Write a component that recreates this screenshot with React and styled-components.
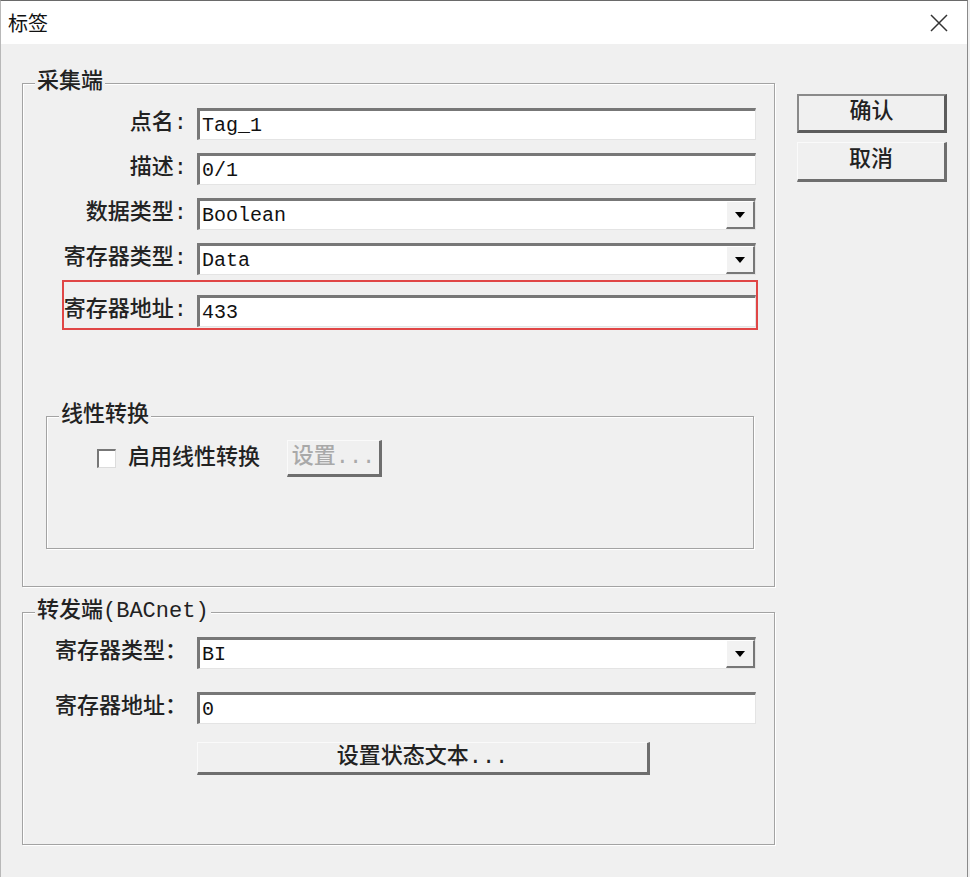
import React from "react";
import styled, { createGlobalStyle } from "styled-components";

const GlobalStyle = createGlobalStyle`
  html, body { margin: 0; padding: 0; background: #f0f0f0; }
  body { font-family: "Liberation Mono", "Noto Sans CJK SC", monospace; color: #222; }
  * { box-sizing: border-box; }
`;

const Window = styled.div`
  width: 968px;
  height: 877px;
  display: flex;
  flex-direction: column;
  border-top: 1px solid #6a6a6a;
  border-left: 1px solid #b8b8b8;
  border-right: 1px solid #8a8a8a;
  background: #f0f0f0;
`;

const TitleBar = styled.div`
  height: 43px;
  flex: none;
  background: #fff;
  display: flex;
  align-items: center;
  justify-content: space-between;
  padding: 0 19px 0 7px;
`;

const Title = styled.div`
  font-family: "Noto Sans CJK SC", sans-serif;
  font-size: 20px;
  line-height: 24px;
  color: #111;
`;

const Close = styled.svg`
  width: 18px;
  height: 18px;
`;

const Body = styled.div`
  flex: 1;
  display: flex;
  gap: 22px;
  padding: 27px 0 0 21px;
`;

const LeftCol = styled.div`
  width: 753px;
  flex: none;
  display: flex;
  flex-direction: column;
`;

const RightCol = styled.div`
  width: 150px;
  flex: none;
  display: flex;
  flex-direction: column;
  gap: 9px;
  padding-top: 23px;
`;

const Group = styled.fieldset`
  margin: ${(p) => p.$margin || "0"};
  padding: ${(p) => p.$pad || "0"};
  border: 1px solid #a3a3a3;
  box-shadow: inset 1px 1px 0 #fff, 1px 1px 0 #fff;
  min-width: 0;
`;

const Legend = styled.legend`
  margin-left: 12px;
  padding: 0 2px;
  font-size: 22px;
  line-height: 24px;
  font-weight: 500;
  color: #222;
  background: #f0f0f0;
`;

const Rows = styled.div`
  display: flex;
  flex-direction: column;
  gap: ${(p) => p.$gap}px;
`;

const Row = styled.div`
  position: relative;
  display: flex;
  align-items: center;
  gap: 10px;
  height: 32px;
  margin-top: ${(p) => p.$mt || 0}px;

  ${(p) =>
    p.$highlight &&
    `
    &::after {
      content: "";
      position: absolute;
      left: 39px;
      right: -2px;
      top: -15px;
      bottom: -3px;
      border: 2px solid #e04646;
      pointer-events: none;
    }
  `}
`;

const Label = styled.label`
  width: 164px;
  flex: none;
  text-align: right;
  font-size: 22px;
  line-height: 32px;
  font-weight: 500;
  color: #222;
  white-space: nowrap;
`;

const TextBox = styled.input`
  flex: 1;
  min-width: 0;
  height: 32px;
  margin: 0;
  background: #fff;
  border: none;
  border-top: 3px solid #777;
  border-left: 3px solid #777;
  border-right: 1px solid #e4e4e4;
  border-bottom: 1px solid #e4e4e4;
  padding: 0 0 0 2px;
  font-family: "Liberation Mono", monospace;
  font-size: 20px;
  color: #111;
  outline: none;
`;

const Combo = styled.div`
  flex: 1;
  min-width: 0;
  height: 32px;
  display: flex;
  align-items: stretch;
  background: #fff;
  border-top: 3px solid #777;
  border-left: 3px solid #777;
  border-right: 1px solid #e4e4e4;
  border-bottom: 1px solid #e4e4e4;
`;

const ComboValue = styled.div`
  flex: 1;
  display: flex;
  align-items: center;
  padding-left: 2px;
  font-family: "Liberation Mono", monospace;
  font-size: 20px;
  color: #111;
`;

const DropButton = styled.div`
  width: 29px;
  flex: none;
  display: flex;
  align-items: center;
  justify-content: center;
  background: #f2f2f2;
  border-top: 1px solid #fff;
  border-left: 1px solid #fff;
  border-right: 2px solid #777;
  border-bottom: 2px solid #777;
`;

const Arrow = styled.span`
  width: 0;
  height: 0;
  border-left: 5px solid transparent;
  border-right: 5px solid transparent;
  border-top: 6px solid #000;
`;

const CheckRow = styled.div`
  display: flex;
  align-items: center;
  height: 37px;
  padding-left: 50px;
`;

const CheckBox = styled.span`
  width: 19px;
  height: 19px;
  flex: none;
  background: #fff;
  border-top: 2px solid #777;
  border-left: 2px solid #777;
  border-right: 1px solid #dcdcdc;
  border-bottom: 1px solid #dcdcdc;
  margin-right: 12px;
`;

const CheckLabel = styled.span`
  font-size: 22px;
  line-height: 32px;
  font-weight: 500;
  color: #222;
`;

const Button = styled.button`
  width: ${(p) => p.$w}px;
  height: ${(p) => p.$h}px;
  flex: none;
  margin: 0 0 0 ${(p) => p.$ml || 0}px;
  padding: 0;
  background: #f0f0f0;
  border-top: ${(p) => (p.$default ? "2px solid #8a8a8a" : "1px solid #fafafa")};
  border-left: ${(p) => (p.$default ? "2px solid #8a8a8a" : "1px solid #fafafa")};
  border-right: 3px solid ${(p) => (p.$default ? "#5c5c5c" : "#6e6e6e")};
  border-bottom: 3px solid ${(p) => (p.$default ? "#5c5c5c" : "#6e6e6e")};
  font-family: "Liberation Mono", "Noto Sans CJK SC", monospace;
  font-size: 22px;
  line-height: 28px;
  font-weight: 500;
  color: ${(p) => (p.disabled ? "#a9a9a9" : "#222")};
`;

const ActionRow = styled.div`
  display: flex;
  margin-top: 18px;
  padding-left: 174px;
`;

export default function App() {
  return (
    <>
      <GlobalStyle />
      <Window>
        <TitleBar>
          <Title>标签</Title>
          <Close viewBox="0 0 18 18">
            <path d="M1 1 L17 17 M17 1 L1 17" stroke="#333" strokeWidth="1.5" fill="none" />
          </Close>
        </TitleBar>
        <Body>
          <LeftCol>
            <Group $pad="13px 18px 37px 0">
              <Legend>采集端</Legend>
              <Rows $gap={13}>
                <Row>
                  <Label>点名:</Label>
                  <TextBox readOnly value="Tag_1" />
                </Row>
                <Row>
                  <Label>描述:</Label>
                  <TextBox readOnly value="0/1" />
                </Row>
                <Row>
                  <Label>数据类型:</Label>
                  <Combo>
                    <ComboValue>Boolean</ComboValue>
                    <DropButton><Arrow /></DropButton>
                  </Combo>
                </Row>
                <Row>
                  <Label>寄存器类型:</Label>
                  <Combo>
                    <ComboValue>Data</ComboValue>
                    <DropButton><Arrow /></DropButton>
                  </Combo>
                </Row>
                <Row $highlight $mt={7}>
                  <Label>寄存器地址:</Label>
                  <TextBox readOnly value="433" />
                </Row>
              </Rows>
              <Group $margin="77px 2px 0 23px" $pad="12px 0 71px 0">
                <Legend>线性转换</Legend>
                <CheckRow>
                  <CheckBox />
                  <CheckLabel>启用线性转换</CheckLabel>
                  <Button $w={95} $h={37} $ml={27} disabled>设置...</Button>
                </CheckRow>
              </Group>
            </Group>
            <Group $margin="13px 0 0 0" $pad="13px 18px 69px 0">
              <Legend>转发端(BACnet)</Legend>
              <Rows $gap={23}>
                <Row>
                  <Label>寄存器类型：</Label>
                  <Combo>
                    <ComboValue>BI</ComboValue>
                    <DropButton><Arrow /></DropButton>
                  </Combo>
                </Row>
                <Row>
                  <Label>寄存器地址：</Label>
                  <TextBox readOnly value="0" />
                </Row>
              </Rows>
              <ActionRow>
                <Button $w={453} $h={33}>设置状态文本...</Button>
              </ActionRow>
            </Group>
          </LeftCol>
          <RightCol>
            <Button $w={150} $h={39} $default>确认</Button>
            <Button $w={150} $h={40}>取消</Button>
          </RightCol>
        </Body>
      </Window>
    </>
  );
}
